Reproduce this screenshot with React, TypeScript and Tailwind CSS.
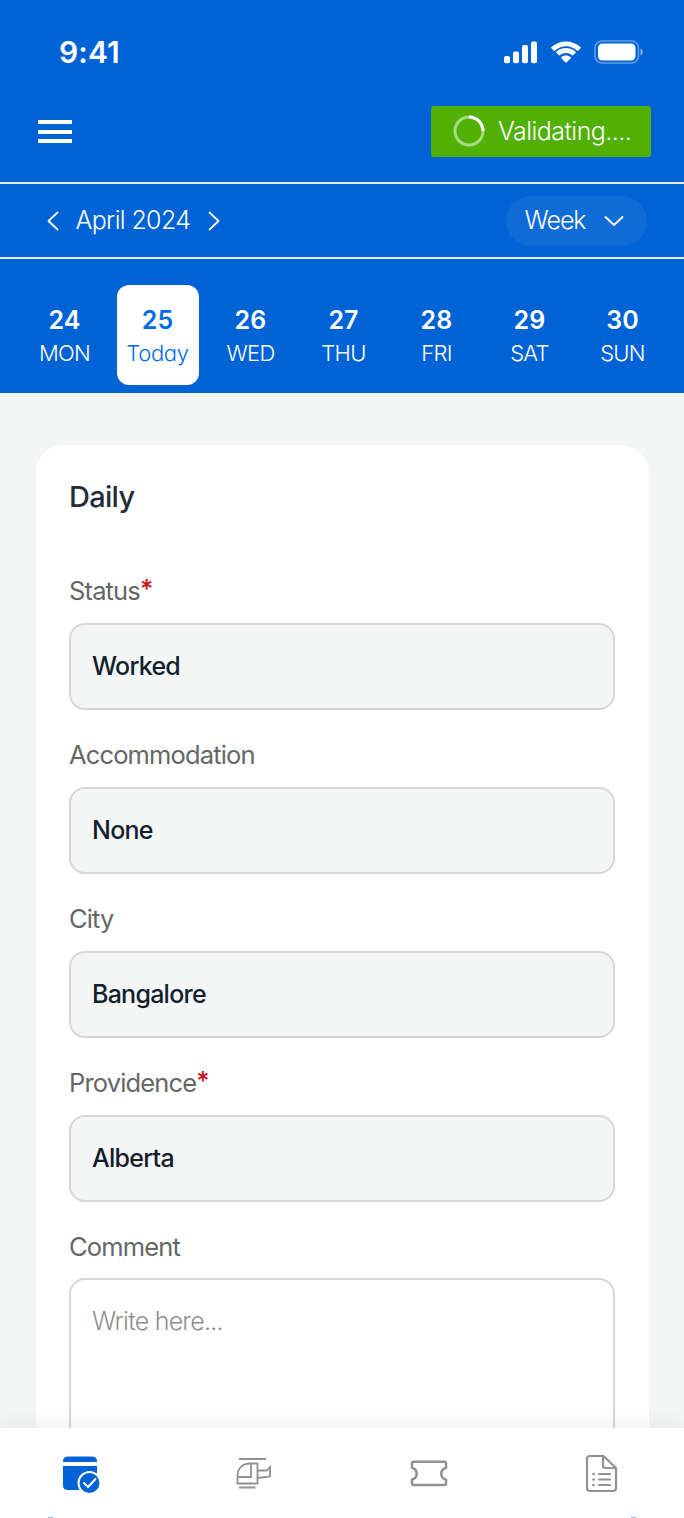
import { useState } from "react";
import clsx from "clsx";

interface Day {
  date: number;
  label: string;
}

interface FieldItem {
  label: string;
  value: string;
  required?: boolean;
}

const DAYS: Day[] = [
  { date: 24, label: "MON" },
  { date: 25, label: "Today" },
  { date: 26, label: "WED" },
  { date: 27, label: "THU" },
  { date: 28, label: "FRI" },
  { date: 29, label: "SAT" },
  { date: 30, label: "SUN" },
];

const FIELDS: FieldItem[] = [
  { label: "Status", value: "Worked", required: true },
  { label: "Accommodation", value: "None" },
  { label: "City", value: "Bangalore" },
  { label: "Providence", value: "Alberta", required: true },
];

function StatusBar() {
  return (
    <div className="flex h-[102px] items-start justify-between pt-8 pr-[40px] pl-[59px]">
      <span className="text-[30px] leading-10 font-[570] tracking-[0.1px]">9:41</span>
      <div className="flex items-center pt-2">
        <svg width="34" height="24" viewBox="0 0 34 24" fill="currentColor">
          <rect x="1" y="16" width="6" height="7.3" rx="2" />
          <rect x="10" y="11.5" width="6" height="11.8" rx="2" />
          <rect x="19" y="5" width="6" height="18.3" rx="2" />
          <rect x="28" y="1.5" width="6" height="21.8" rx="2" />
        </svg>
        <svg className="ml-[13px]" width="32" height="24" viewBox="0 0 32 24" fill="currentColor">
          <path d="M16 6.3c4.2 0 8.1 1.6 11 4.4.3.3.7.3 1 0l2.6-2.5c.3-.3.3-.8 0-1.1C22.5-.4 9.5-.4 1.4 7.1c-.3.3-.3.8 0 1.1L4 10.7c.3.3.7.3 1 0 2.9-2.8 6.8-4.4 11-4.4Z" />
          <path d="M16 13c2.2 0 4.4.8 6 2.3.3.3.7.3 1 0l2.6-2.5c.3-.3.3-.8 0-1.1-5.4-5-13.8-5-19.2 0-.3.3-.3.8 0 1.1L9 15.3c.3.3.7.3 1 0C11.600 13.8 13.8 13 16 13Z" />
          <path d="M20.7 18.3c.3-.3.3-.8 0-1.1-2.7-2.3-6.7-2.3-9.4 0-.3.3-.3.8 0 1.1l4.200 4.1c.3.3.7.3 1 0Z" />
        </svg>
        <svg className="ml-3" width="50" height="24" viewBox="0 0 50 24">
          <rect x="1" y="1" width="43.5" height="22" rx="7" fill="none" stroke="currentColor" strokeOpacity="0.4" strokeWidth="1.5" />
          <rect x="4" y="3.5" width="37.5" height="17" rx="4.5" fill="currentColor" />
          <path d="M46.5 8.5v7c1.4-.6 2.3-2 2.3-3.5s-.9-2.9-2.3-3.5Z" fill="currentColor" fillOpacity="0.5" />
        </svg>
      </div>
    </div>
  );
}

function Spinner() {
  return (
    <svg width="32" height="32" viewBox="0 0 32 32" fill="none" stroke="white" strokeWidth="3">
      <circle cx="16" cy="16" r="14" strokeOpacity="0.5" />
      <path d="M16 2a14 14 0 0 1 14 14" />
    </svg>
  );
}

function Chevron({ d, width, height }: { d: string; width: number; height: number }) {
  return (
    <svg
      width={width}
      height={height}
      viewBox={`0 0 ${width} ${height}`}
      fill="none"
      stroke="currentColor"
      strokeWidth="1.8"
      strokeLinecap="round"
      strokeLinejoin="round"
    >
      <path d={d} />
    </svg>
  );
}

function Header() {
  const [selected, setSelected] = useState(25);

  return (
    <header className="h-[393px] shrink-0 bg-[#0063d5] text-white">
      <StatusBar />

      <div className="flex h-20 items-start justify-between pt-1 pr-[33px] pl-[38px]">
        <button type="button" aria-label="Menu" className="mt-[14px] flex flex-col gap-[5.5px]">
          <span className="h-1 w-[34px] bg-white" />
          <span className="h-1 w-[34px] bg-white" />
          <span className="h-1 w-[34px] bg-white" />
        </button>
        <button
          type="button"
          className="flex h-[50.5px] w-[220px] items-center rounded-[3px] bg-[#50b004] pl-[21.5px]"
        >
          <Spinner />
          <span className="ml-[13.5px] pt-px text-[25px] font-[350] tracking-[-0.55px] whitespace-nowrap">Validating....</span>
        </button>
      </div>

      <div className="flex h-[77px] items-center justify-between border-y-2 border-white/90 pr-[37px] pl-[47px]">
        <div className="flex items-center">
          <button type="button" aria-label="Previous month">
            <Chevron width={12} height={20} d="M10.5 1.5 1.5 10l9 8.5" />
          </button>
          <span className="ml-[16.5px] w-[115.5px] text-[25px] font-[350] tracking-[-0.65px] whitespace-nowrap">
            April 2024
          </span>
          <button type="button" aria-label="Next month" className="ml-[17px]">
            <Chevron width={12} height={20} d="m1.5 1.5 9 8.5-9 8.5" />
          </button>
        </div>
        <button type="button" className="flex h-[50px] w-[141px] items-center rounded-full bg-white/6 pl-[18.5px]">
          <span className="w-[61px] text-[25px] font-[350] tracking-[-1px]">Week</span>
          <span className="ml-[18px]">
            <Chevron width={20} height={12} d="m1.5 2 8.5 8 8.5-8" />
          </span>
        </button>
      </div>

      <div className="flex gap-[11px] pt-[26px] pl-[23.5px]">
        {DAYS.map((day) => (
          <button
            key={day.date}
            type="button"
            onClick={() => setSelected(day.date)}
            className={clsx(
              "flex h-[100px] w-[82px] flex-col items-center rounded-xl pt-[19px]",
              selected === day.date && "bg-white text-[#006aec]",
            )}
          >
            <span className="text-[25px] leading-8 font-[570] tracking-[0.1px]">{day.date}</span>
            <span
              className={clsx(
                "text-[22px] leading-[34px] font-[350]",
                day.label === "Today"
                  ? "tracking-[-0.3px] [font-feature-settings:'cv11']"
                  : "tracking-[-0.7px]",
              )}
            >
              {day.label}
            </span>
          </button>
        ))}
      </div>
    </header>
  );
}

function Label({ text, required }: { text: string; required?: boolean }) {
  return (
    <span className="block h-[33px] text-[25.5px] leading-8 tracking-[-0.85px] text-[#666]">
      {text}
      {required && <span className="align-[2px] leading-none font-medium text-[#cb1220]">*</span>}
    </span>
  );
}

function DailyForm() {
  return (
    <section className="h-[1100px] rounded-t-[28px] bg-white px-[33.5px] pt-8">
      <h1 className="h-[98px] text-[29px] leading-10 font-medium tracking-[-0.7px] text-[#232d3a]">Daily</h1>
      {FIELDS.map((field) => (
        <div key={field.label} className="mb-[29.5px]">
          <Label text={field.label} required={field.required} />
          <div className="mt-[14.5px] flex h-[87px] items-center rounded-2xl border-2 border-[#d9d5d7] bg-[#f4f6f6] px-[21px] pt-0.5 text-[25px] font-[470] tracking-[-0.75px] text-[#121e2d]">
            {field.value}
          </div>
        </div>
      ))}
      <Label text="Comment" />
      <textarea
        placeholder="Write here..."
        className="mt-[14px] block h-[230px] w-full resize-none rounded-2xl border-2 border-[#d9d5d7] px-[21px] py-[25px] text-[25px] leading-8 font-[360] tracking-[-0.75px] outline-none placeholder:text-[#8e8e8e]"
      />
    </section>
  );
}

function BottomNav() {
  return (
    <nav className="relative h-[90px] shrink-0 bg-white text-[#929292] shadow-[0_-4px_18px_rgba(0,0,0,0.06)]">
      <div className="flex items-start justify-between pt-[26px] pr-[66px] pl-[62px]">
        <button type="button" aria-label="Timesheet">
          <svg width="40" height="40" viewBox="0 0 40 40" fill="#0063d5">
            <path d="M1 8V7.500Q1 2.500 6.500 2.500h23Q35 2.500 35 7.500V8Z" />
            <path d="M1 12h34v19.500q0 4.500-5 4.500H6q-5 0-5-4.500Z" />
            <circle cx="27.5" cy="29" r="11" stroke="white" strokeWidth="2" />
            <path d="m22 29 4 4 7.500-8" fill="none" stroke="white" strokeWidth="2" strokeLinecap="round" strokeLinejoin="round" />
          </svg>
        </button>
        <button type="button" aria-label="Flights" className="ml-[-3px]">
          <svg width="38" height="40" viewBox="0 0 38 40" fill="none" stroke="currentColor" strokeWidth="1.8">
            <path d="M4 5h27M4 33.500h16.500" />
            <path d="M22.500 9.500H15C7.500 9.500 2.500 14.500 2.500 22v7.500h20V9.500Z" />
            <path d="M16 9.500V23H2.500" />
            <path d="M22.500 16.500H32l3-3.500v9.500l-12.500 1.500" />
          </svg>
        </button>
        <button type="button" aria-label="Tickets" className="-ml-px">
          <svg width="40" height="40" viewBox="0 0 40 40" fill="none" stroke="currentColor" strokeWidth="2.5" strokeLinejoin="round">
            <path d="M4.500 7.800h31q1.500 0 1.500 1.500v4.700a5.800 5.800 0 0 0 0 11.400v4.200q0 1.500-1.500 1.500h-31Q3 31.100 3 29.600v-4.200a5.800 5.800 0 0 0 0-11.400V9.300q0-1.500 1.500-1.500Z" />
          </svg>
        </button>
        <button type="button" aria-label="Reports" className="-mr-px">
          <svg width="34" height="40" viewBox="0 0 34 40" fill="none" stroke="currentColor" strokeWidth="2.2" strokeLinejoin="round">
            <path d="M5 2h13.500L31 14v20q0 3-3 3H5q-3 0-3-3V5q0-3 3-3Z" />
            <path d="M18 2v9.500q0 2.500 2.500 2.500H31" />
            <path d="M14 20h11M14 25.500h11M14 31h11" strokeLinecap="round" />
            <path d="M8.500 20h.1M8.500 25.500h.1M8.500 31h.1" strokeWidth="2.6" strokeLinecap="round" />
          </svg>
        </button>
      </div>
      <span className="absolute bottom-0 left-12 h-px w-[5px] bg-[#8db4dc]" />
      <span className="absolute right-12 bottom-0 h-px w-[5px] bg-[#8db4dc]" />
    </nav>
  );
}

export default function App() {
  return (
    <div className="flex h-[1518px] w-[684px] flex-col overflow-hidden bg-[#f4f6f6] font-['Inter',sans-serif]">
      <Header />
      <main className="min-h-0 flex-1 overflow-hidden px-[35.5px] pt-[52px]">
        <DailyForm />
      </main>
      <BottomNav />
    </div>
  );
}
